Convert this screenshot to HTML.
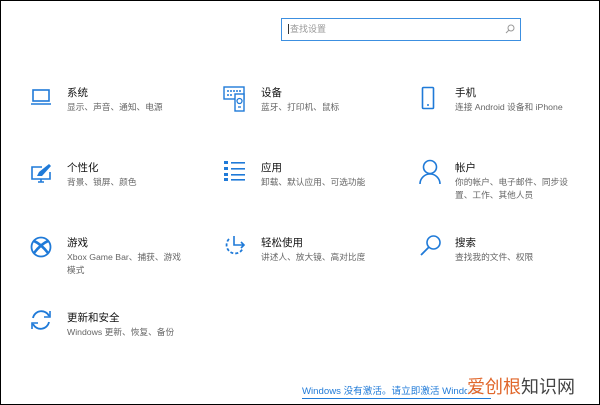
<!DOCTYPE html>
<html><head><meta charset="utf-8"><style>
*{margin:0;padding:0;box-sizing:border-box}
body{width:600px;height:405px;background:#fff;border:1px solid #000;position:relative;overflow:hidden;font-family:"Liberation Sans","Noto Sans CJK SC",sans-serif}
.s{position:absolute;left:280px;top:17px;width:240px;height:23px;border:1.5px solid #3c8fe0;background:#fff}
.s span{position:absolute;left:6px;top:5px;font-size:9px;color:#999;border-left:1px solid #333;padding-left:1px;line-height:10px}
.s svg{position:absolute;right:5px;top:5px}
.i{position:absolute}
.t{position:absolute;font-size:10.5px;color:#111;line-height:13px}
.d{position:absolute;font-size:8.7px;color:#666;line-height:12.5px;width:118px}
.l{position:absolute;left:301px;top:385px;font-size:9.6px;color:#1f7ad8;border-bottom:1px solid #1f7ad8;line-height:12px;white-space:nowrap}
.w{position:absolute;left:466px;top:375px;font-size:18px;color:#444;line-height:22px;background:rgba(255,255,255,.85)}
.w b{color:#e0662a;font-weight:normal}
</style></head><body>
<div class="s"><span>查找设置</span><svg width="10" height="10" viewBox="0 0 10 10"><circle cx="6" cy="4" r="3" fill="none" stroke="#999" stroke-width="1"/><path d="M4 6L1 9" stroke="#999"/></svg></div>

<svg class="i" style="left:29px;top:87px" width="22" height="20" viewBox="0 0 22 20"><rect x="3" y="2" width="16" height="11" fill="none" stroke="#1f7ad8" stroke-width="1.6"/><path d="M1 16H21" stroke="#1f7ad8" stroke-width="1.6"/></svg>
<div class="t" style="left:66px;top:86px">系统</div><div class="d" style="left:66px;top:100px">显示、声音、通知、电源</div>

<svg class="i" style="left:222px;top:85px" width="24" height="26" viewBox="0 0 24 26"><rect x="1" y="1" width="20" height="12" fill="none" stroke="#1f7ad8" stroke-width="1.4"/><path d="M4 5h14M4 9h6" stroke="#1f7ad8" stroke-width="1.4" stroke-dasharray="2 1"/><rect x="12" y="8" width="9" height="17" fill="#fff" stroke="#1f7ad8" stroke-width="1.4"/><circle cx="16.5" cy="15" r="2.5" fill="none" stroke="#1f7ad8" stroke-width="1.3"/><path d="M15 21h3" stroke="#1f7ad8" stroke-width="1.3"/></svg>
<div class="t" style="left:260px;top:86px">设备</div><div class="d" style="left:260px;top:100px">蓝牙、打印机、鼠标</div>

<svg class="i" style="left:420px;top:85px" width="14" height="24" viewBox="0 0 14 24"><rect x="1.5" y="1.5" width="11" height="21" rx="1" fill="none" stroke="#1f7ad8" stroke-width="1.6"/><path d="M6 19h2" stroke="#1f7ad8" stroke-width="1.5"/></svg>
<div class="t" style="left:454px;top:86px">手机</div><div class="d" style="left:454px;top:100px;width:145px">连接 Android 设备和 iPhone</div>

<svg class="i" style="left:29px;top:162px" width="22" height="22" viewBox="0 0 22 22"><path d="M12 4H2v12h18V9" fill="none" stroke="#1f7ad8" stroke-width="1.6"/><path d="M8 19h6M11 16v3" stroke="#1f7ad8" stroke-width="1.6"/><path d="M7 13l2-4 10-8 2 2-9 10z" fill="#1f7ad8"/></svg>
<div class="t" style="left:66px;top:161px">个性化</div><div class="d" style="left:66px;top:175px">背景、锁屏、颜色</div>

<svg class="i" style="left:223px;top:159px" width="22" height="22" viewBox="0 0 22 22"><g fill="#1f7ad8"><rect x="0" y="1" width="4" height="3"/><rect x="0" y="7" width="4" height="3"/><rect x="0" y="13" width="4" height="3"/><rect x="0" y="18" width="4" height="3"/><rect x="7" y="2" width="14" height="1.6"/><rect x="7" y="8" width="14" height="1.6"/><rect x="7" y="14" width="14" height="1.6"/><rect x="7" y="19" width="14" height="1.6"/></g></svg>
<div class="t" style="left:260px;top:161px">应用</div><div class="d" style="left:260px;top:175px;width:130px">卸载、默认应用、可选功能</div>

<svg class="i" style="left:418px;top:158px" width="22" height="26" viewBox="0 0 22 26"><circle cx="11" cy="8" r="6.5" fill="none" stroke="#1f7ad8" stroke-width="1.6"/><path d="M1 25a10 10 0 0 1 20 0" fill="none" stroke="#1f7ad8" stroke-width="1.6"/></svg>
<div class="t" style="left:454px;top:161px">帐户</div><div class="d" style="left:454px;top:175px;width:116px">你的帐户、电子邮件、同步设置、工作、其他人员</div>

<svg class="i" style="left:29px;top:235px" width="22" height="22" viewBox="0 0 22 22"><circle cx="11" cy="11" r="9.5" fill="none" stroke="#1f7ad8" stroke-width="1.8"/><path d="M4 5q7 3 14 12M18 5q-7 3-14 12" fill="none" stroke="#1f7ad8" stroke-width="2.6"/></svg>
<div class="t" style="left:66px;top:236px">游戏</div><div class="d" style="left:66px;top:250px">Xbox Game Bar、捕获、游戏模式</div>

<svg class="i" style="left:222px;top:233px" width="24" height="24" viewBox="0 0 24 24"><path d="M11 2v9h10M18 8l3 3-3 3" fill="none" stroke="#1f7ad8" stroke-width="1.6"/><path d="M6 5a8.5 8.5 0 1 0 14 9" fill="none" stroke="#1f7ad8" stroke-width="1.8" stroke-dasharray="3 2"/></svg>
<div class="t" style="left:260px;top:236px">轻松使用</div><div class="d" style="left:260px;top:250px;width:130px">讲述人、放大镜、高对比度</div>

<svg class="i" style="left:418px;top:233px" width="24" height="24" viewBox="0 0 24 24"><circle cx="14.5" cy="8.5" r="6.5" fill="none" stroke="#1f7ad8" stroke-width="1.6"/><path d="M10 13L2 21" stroke="#1f7ad8" stroke-width="1.8"/></svg>
<div class="t" style="left:454px;top:236px">搜索</div><div class="d" style="left:454px;top:250px">查找我的文件、权限</div>

<svg class="i" style="left:28px;top:307px" width="24" height="24" viewBox="0 0 24 24"><path d="M4 10a8.5 8.5 0 0 1 16-2M20 14a8.5 8.5 0 0 1-16 2" fill="none" stroke="#1f7ad8" stroke-width="1.8"/><path d="M21 3v6h-6M3 21v-6h6" fill="none" stroke="#1f7ad8" stroke-width="1.6"/></svg>
<div class="t" style="left:66px;top:311px">更新和安全</div><div class="d" style="left:66px;top:325px;width:130px">Windows 更新、恢复、备份</div>

<div class="l">Windows 没有激活。请立即激活 Windows。</div>
<div class="w"><b>爱创根</b>知识网</div>
</body></html>
